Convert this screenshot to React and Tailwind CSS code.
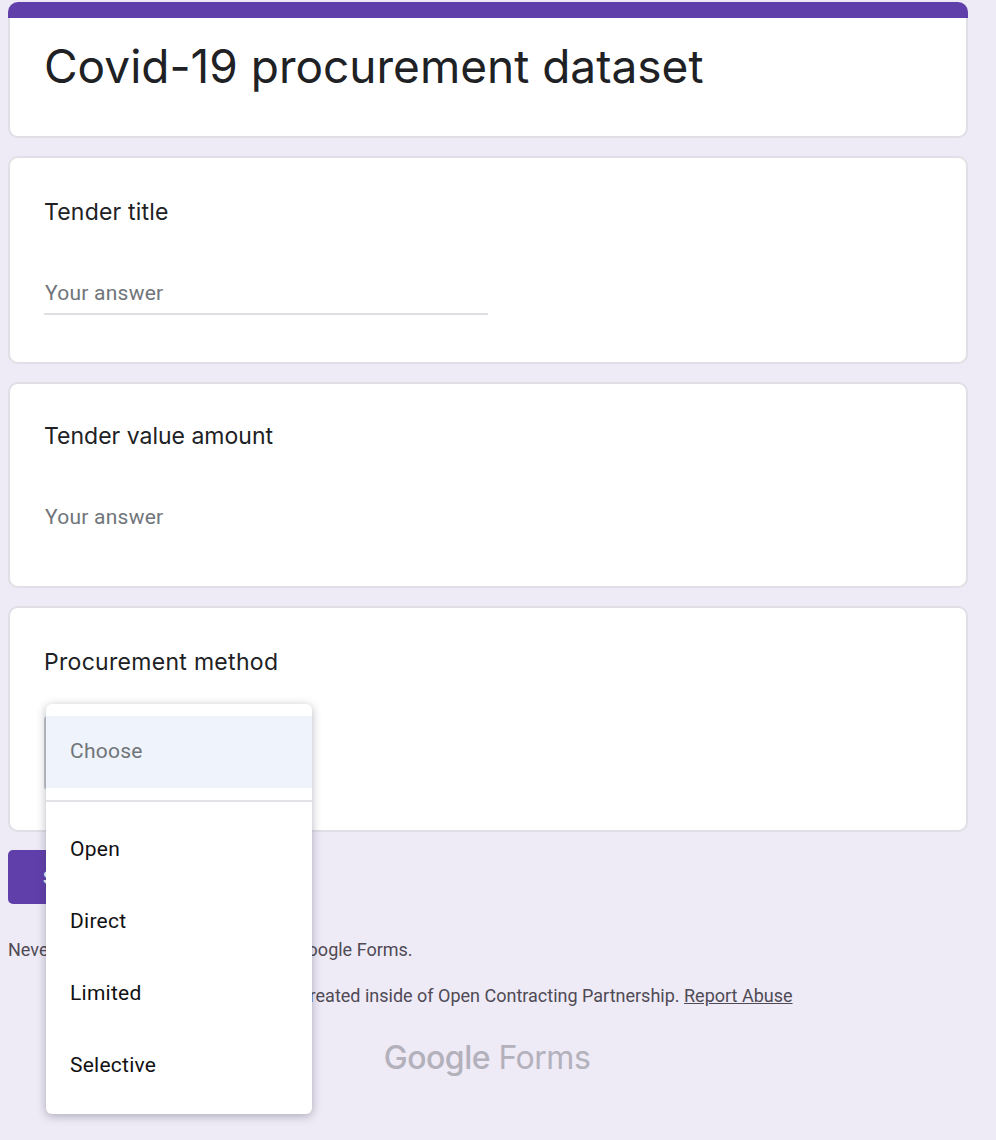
import React from 'react';

const titleFont = "font-['Inter',sans-serif]";
const bodyFont = "font-['Roboto',sans-serif]";

const QuestionCard = ({ title, height, titleClass, children }) => (
    <div className={`${height} bg-white rounded-[10px] border-2 border-[#e0dfe6] pl-[35px] relative`}>
        <div className={`${titleFont} ${titleClass} -ml-px text-[23px] leading-[28px] text-[#202124]`}>{title}</div>
        {children}
    </div>
);

const MethodMenu = () => {
    const options = ['Open', 'Direct', 'Limited', 'Selective'];
    return (
        <div className="absolute left-[36px] top-[96px] w-[266px] h-[410px] bg-white rounded-[6px] shadow-[0_2px_10px_rgba(50,50,70,0.35)] pt-[12px] z-10">
            <div className="h-[72px] bg-[#eff3fb] pl-[24px] flex items-center text-[21px] tracking-[0.25px] text-[#70757a]">Choose</div>
            <div className="h-[2px] bg-[#e3e3e7] mt-[12px] mb-[12px]"></div>
            {options.map(option => (
                <div key={option} className="h-[72px] pl-[24px] flex items-center text-[21px] tracking-[0.25px] text-[#111114]">{option}</div>
            ))}
        </div>
    );
};

const App = () => {
    return (
        <div className={`${bodyFont} w-[996px] h-[1140px] overflow-hidden bg-[#eeeaf6] pl-2 pr-[28px] pt-[2px]`}>
            <div className="h-[136px] bg-white rounded-[10px] border-x-2 border-b-2 border-[#e0dfe6] relative">
                <div className="absolute -left-[2px] -right-[2px] top-0 h-4 bg-[#613fab] rounded-t-[10px]"></div>
                <h1 className={`${titleFont} pl-[34px] pt-[34px] text-[46px] leading-[60px] text-[#202124]`}>Covid-19 procurement dataset</h1>
            </div>

            <div className="mt-[18px]">
                <QuestionCard title="Tender title" height="h-[208px]" titleClass="pt-[40px] tracking-[0.2px]">
                    <div className="mt-[52px] w-[444px] -ml-px pl-px h-[37px] border-b-2 border-[#dfdfe3] text-[21px] tracking-[0.25px] text-[#70757a] leading-[30px]">Your answer</div>
                </QuestionCard>
            </div>

            <div className="mt-[18px]">
                <QuestionCard title="Tender value amount" height="h-[206px]" titleClass="pt-[38px]">
                    <div className="mt-[52px] text-[21px] tracking-[0.25px] text-[#70757a] leading-[30px]">Your answer</div>
                </QuestionCard>
            </div>

            <div className="mt-[18px]">
                <QuestionCard title="Procurement method" height="h-[226px]" titleClass="pt-[40px] tracking-[0.3px]">
                    <div className="absolute left-[34px] top-[108px] w-[120px] h-[74px] border-2 border-[#c6c6cb] rounded-[4px]"></div>
                    <MethodMenu />
                </QuestionCard>
            </div>

            <button className="mt-[18px] h-[54px] pl-[35px] pr-[35px] bg-[#613fab] rounded-[5px] text-white text-[18px] font-medium">Submit</button>

            <div className="mt-[34px] text-[18px] leading-[24px] text-[#4f4a55]">
                <span className="[word-spacing:4.5px]">Never submit passwords through </span>Google Forms.
            </div>

            <div className="mt-[22px] pr-[2px] text-center text-[18px] leading-[24px] text-[#4f4a55]">
                This form was created inside of Open Contracting Partnership. <a className="underline">Report Abuse</a>
            </div>

            <div className={`${titleFont} mt-[28px] pr-[2px] text-center text-[32px] leading-[44px] tracking-[-0.5px] text-[#b3b1bb]`}>
                <span className="font-medium">Google</span> Forms
            </div>
        </div>
    );
};

export default App;
